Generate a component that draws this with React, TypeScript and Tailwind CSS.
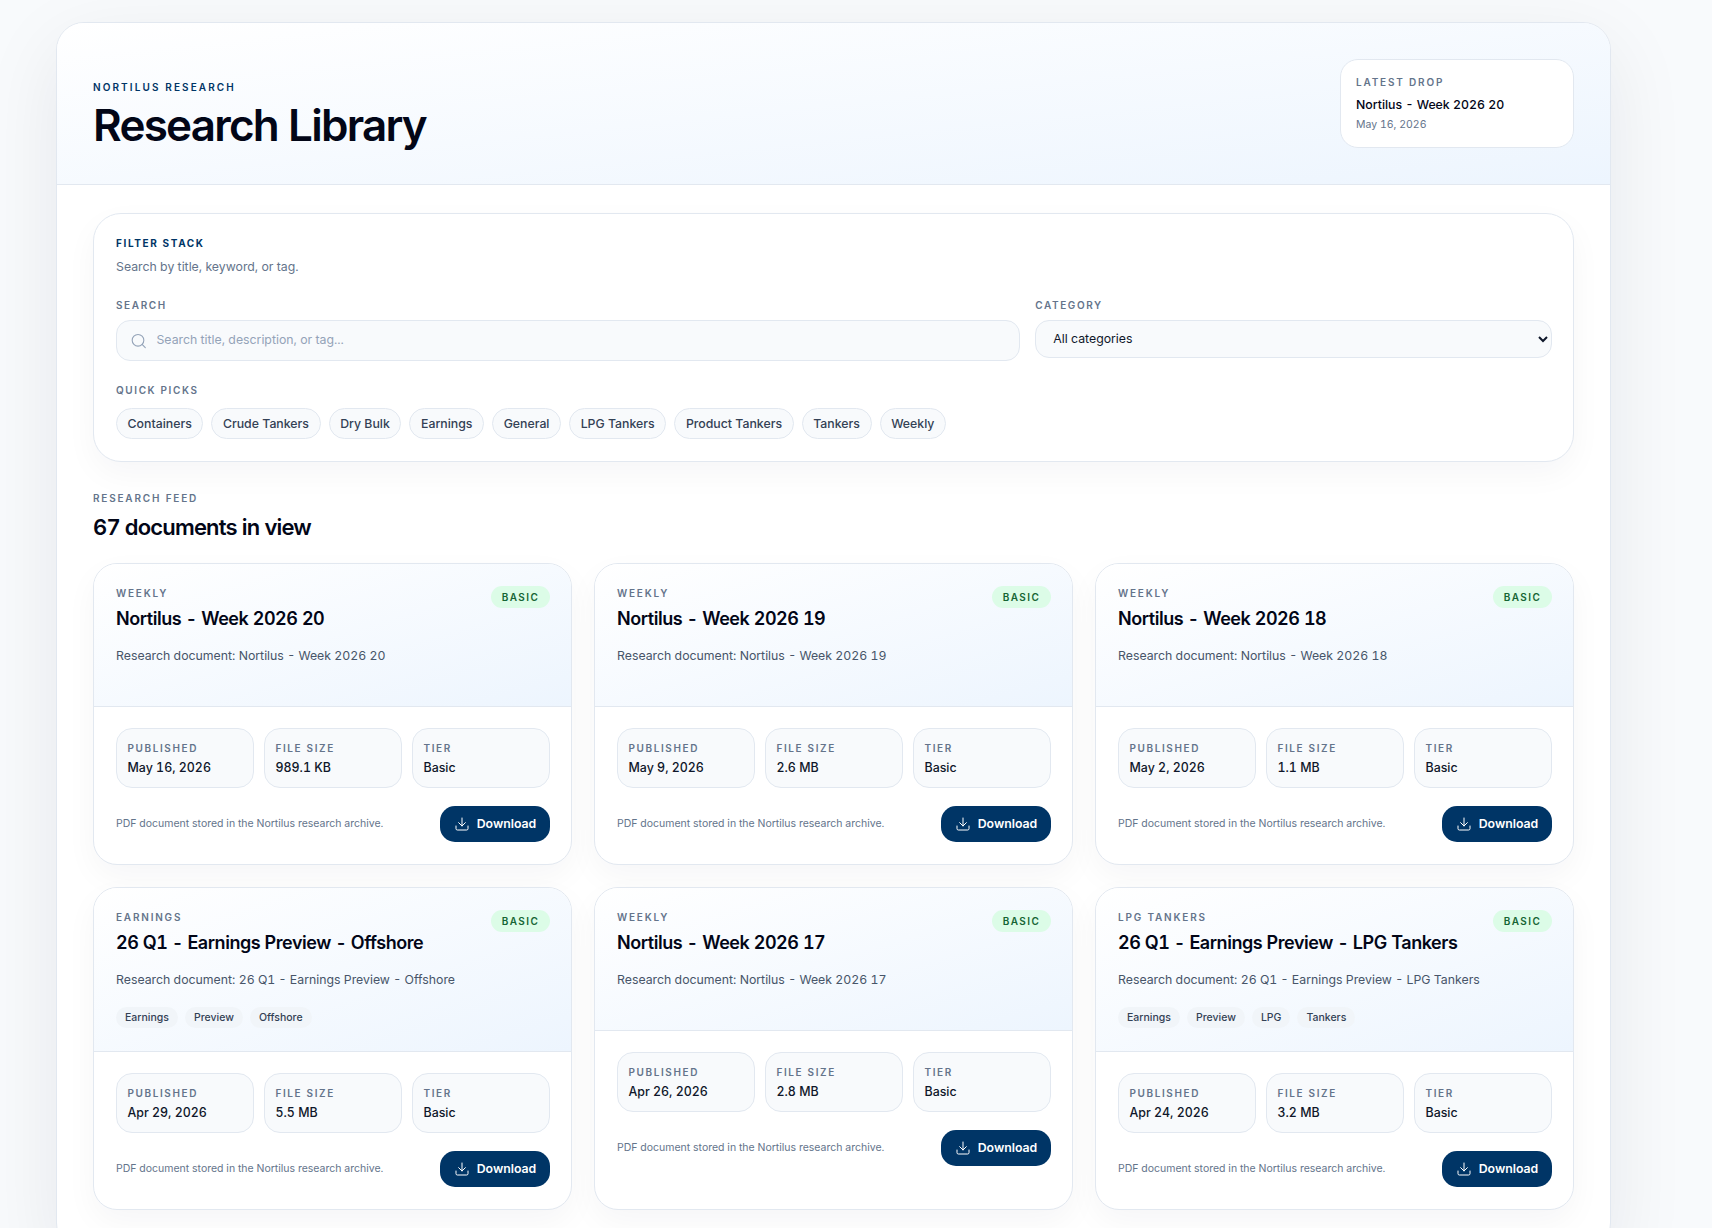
import { Download, Search } from 'lucide-react';

interface Doc {
  category: string;
  title: string;
  published: string;
  size: string;
  tags?: string[];
}

const docs: Doc[] = [
  { category: 'Weekly', title: 'Nortilus - Week 2026 20', published: 'May 16, 2026', size: '989.1 KB' },
  { category: 'Weekly', title: 'Nortilus - Week 2026 19', published: 'May 9, 2026', size: '2.6 MB' },
  { category: 'Weekly', title: 'Nortilus - Week 2026 18', published: 'May 2, 2026', size: '1.1 MB' },
  {
    category: 'Earnings',
    title: '26 Q1 - Earnings Preview - Offshore',
    published: 'Apr 29, 2026',
    size: '5.5 MB',
    tags: ['Earnings', 'Preview', 'Offshore'],
  },
  { category: 'Weekly', title: 'Nortilus - Week 2026 17', published: 'Apr 26, 2026', size: '2.8 MB' },
  {
    category: 'LPG Tankers',
    title: '26 Q1 - Earnings Preview - LPG Tankers',
    published: 'Apr 24, 2026',
    size: '3.2 MB',
    tags: ['Earnings', 'Preview', 'LPG', 'Tankers'],
  },
];

const quickPicks = [
  'Containers',
  'Crude Tankers',
  'Dry Bulk',
  'Earnings',
  'General',
  'LPG Tankers',
  'Product Tankers',
  'Tankers',
  'Weekly',
];

function Stat({ label, value }: { label: string; value: string }) {
  return (
    <div className="h-[60px] rounded-[16px] border border-[#e2e8f0] bg-[#f8fafc] px-[10.5px] pt-[12px]">
      <div className="text-[10px] leading-[14px] font-semibold tracking-[0.16em] text-[#64748b] uppercase">{label}</div>
      <div className="mt-[3px] text-[12.4px] leading-[20px] font-medium text-[#0f172a]">{value}</div>
    </div>
  );
}

function DocCard({ doc }: { doc: Doc }) {
  return (
    <div className="flex flex-col overflow-hidden rounded-[24px] border border-[#e2e8f0] bg-white shadow-[0_12px_32px_rgba(15,23,42,0.04)]">
      <div className="border-b border-[#e2e8f0] bg-linear-to-br from-white to-[#edf5fe] pt-[22px] pr-[21px] pb-[22px] pl-[22px]">
        <div className="flex items-start justify-between gap-3">
          <div className="min-w-0">
            <div className="text-[10px] leading-[14px] font-semibold tracking-[0.18em] text-[#64748b] uppercase">{doc.category}</div>
            <div className="mt-[6px] text-[18px] leading-[26px] font-semibold tracking-[-0.025em] text-[#020617]">{doc.title}</div>
          </div>
          <span className="flex h-[22px] w-[59px] shrink-0 items-center justify-center rounded-full bg-[#dcfce7] text-[10px] font-semibold tracking-[0.14em] text-[#166534]">
            BASIC
          </span>
        </div>
        <p className="mt-[14px] min-h-[37px] text-[12.3px] leading-[20px] text-[#475569]">Research document: {doc.title}</p>
        {doc.tags && (
          <div className="mb-[1px] flex gap-[7px]">
            {doc.tags.map((t) => (
              <span key={t} className="flex h-[21px] items-center rounded-full bg-[#f1f5f9] px-[9px] text-[10.5px] font-medium text-[#334155]">
                {t}
              </span>
            ))}
          </div>
        )}
        {!doc.tags && <div className="h-[1px]" />}
      </div>
      <div className="pt-[21px] pr-[21px] pb-[22px] pl-[22px]">
        <div className="grid grid-cols-3 gap-[10px]">
          <Stat label="Published" value={doc.published} />
          <Stat label="File size" value={doc.size} />
          <Stat label="Tier" value="Basic" />
        </div>
        <div className="mt-[18px] flex items-center justify-between gap-3">
          <p className="text-[10.5px] leading-[16px] text-[#64748b]">PDF document stored in the Nortilus research archive.</p>
          <button className="flex h-[36px] w-[110px] items-center justify-center gap-[7px] rounded-[15px] bg-[#003566] text-[12.3px] font-semibold text-white">
            <Download size={16} strokeWidth={1.5} />
            Download
          </button>
        </div>
      </div>
    </div>
  );
}

export default function App() {
  return (
    <div className="h-screen overflow-hidden bg-[#f8fafc] pt-[22px] pl-[56px] font-['Inter',sans-serif] tabular-nums">
      <div className="w-[1555px] overflow-hidden rounded-[28px] border border-[#e2e8f0] bg-white shadow-[0_24px_80px_rgba(15,23,42,0.08)]">
        <div className="flex h-[162px] items-start justify-between border-b border-[#e2e8f0] bg-linear-to-br from-white to-[#edf5fe] pt-[36px] pr-[36px] pl-[36px]">
          <div className="pt-[21px]">
            <div className="text-[10px] leading-[14px] font-semibold tracking-[0.21em] text-[#003566] uppercase">Nortilus Research</div>
            <h1 className="mt-[5px] text-[44px] leading-[52px] font-semibold tracking-[-0.04em] text-[#020617]">Research Library</h1>
          </div>
          <div className="h-[89px] w-[234px] rounded-[18px] border border-[#e2e8f0] bg-white px-[15px] pt-[15px]">
            <div className="text-[10px] leading-[14px] font-semibold tracking-[0.18em] text-[#64748b] uppercase">Latest drop</div>
            <div className="mt-[6px] text-[12.3px] leading-[20px] font-medium text-[#020617]">Nortilus - Week 2026 20</div>
            <div className="mt-[1px] text-[10.5px] leading-[18px] text-[#64748b]">May 16, 2026</div>
          </div>
        </div>

        <div className="px-[36px] pt-[28px] pb-[40px]">
          <div className="h-[249px] rounded-[28px] border border-[#e2e8f0] bg-white pt-[22px] pr-[21px] pl-[22px] shadow-[0_12px_32px_rgba(15,23,42,0.04)]">
            <div className="text-[10px] leading-[14px] font-bold tracking-[0.16em] text-[#003566] uppercase">Filter stack</div>
            <p className="mt-[6px] pt-[1px] text-[12.3px] leading-[20px] text-[#64748b]">Search by title, keyword, or tag.</p>
            <div className="mt-[21px] grid grid-cols-[1.75fr_1fr] items-start gap-[15px]">
              <div>
                <div className="text-[10px] leading-[14px] font-semibold tracking-[0.16em] text-[#64748b] uppercase">Search</div>
                <div className="mt-[8px] flex h-[41px] items-center gap-[9px] rounded-[14px] border border-[#e2e8f0] bg-[#f8fafc] pl-[13px]">
                  <Search size={18} strokeWidth={1.5} className="text-[#94a3b8]" />
                  <input
                    placeholder="Search title, description, or tag..."
                    className="w-full bg-transparent text-[12.3px] text-[#0f172a] outline-none placeholder:text-[#94a3b8]"
                  />
                </div>
              </div>
              <div>
                <div className="text-[10px] leading-[14px] font-semibold tracking-[0.16em] text-[#64748b] uppercase">Category</div>
                <select className="mt-[8px] h-[38px] w-full rounded-[14px] border border-[#e2e8f0] bg-[#f8fafc] px-[13px] pb-[1px] text-[12.3px] text-[#0f172a] outline-none">
                  <option>All categories</option>
                </select>
              </div>
            </div>
            <div className="mt-[22px] text-[10px] leading-[14px] font-semibold tracking-[0.16em] text-[#64748b] uppercase">Quick picks</div>
            <div className="mt-[11px] flex gap-[8px]">
              {quickPicks.map((p) => (
                <span key={p} className="flex h-[31px] items-center rounded-full border border-[#e2e8f0] bg-[#f8fafc] px-[10.6px] pt-[1px] text-[12.3px] font-medium text-[#334155]">
                  {p}
                </span>
              ))}
            </div>
          </div>

          <div className="mt-[29px] text-[10px] leading-[14px] font-semibold tracking-[0.18em] text-[#64748b] uppercase">Research feed</div>
          <h2 className="mt-[7px] text-[22px] leading-[30px] font-semibold tracking-[-0.038em] text-[#020617]">67 documents in view</h2>

          <div className="mt-[21px] grid grid-cols-3 gap-[22px]">
            {docs.map((d) => (
              <DocCard key={d.title} doc={d} />
            ))}
          </div>
        </div>
      </div>
    </div>
  );
}
